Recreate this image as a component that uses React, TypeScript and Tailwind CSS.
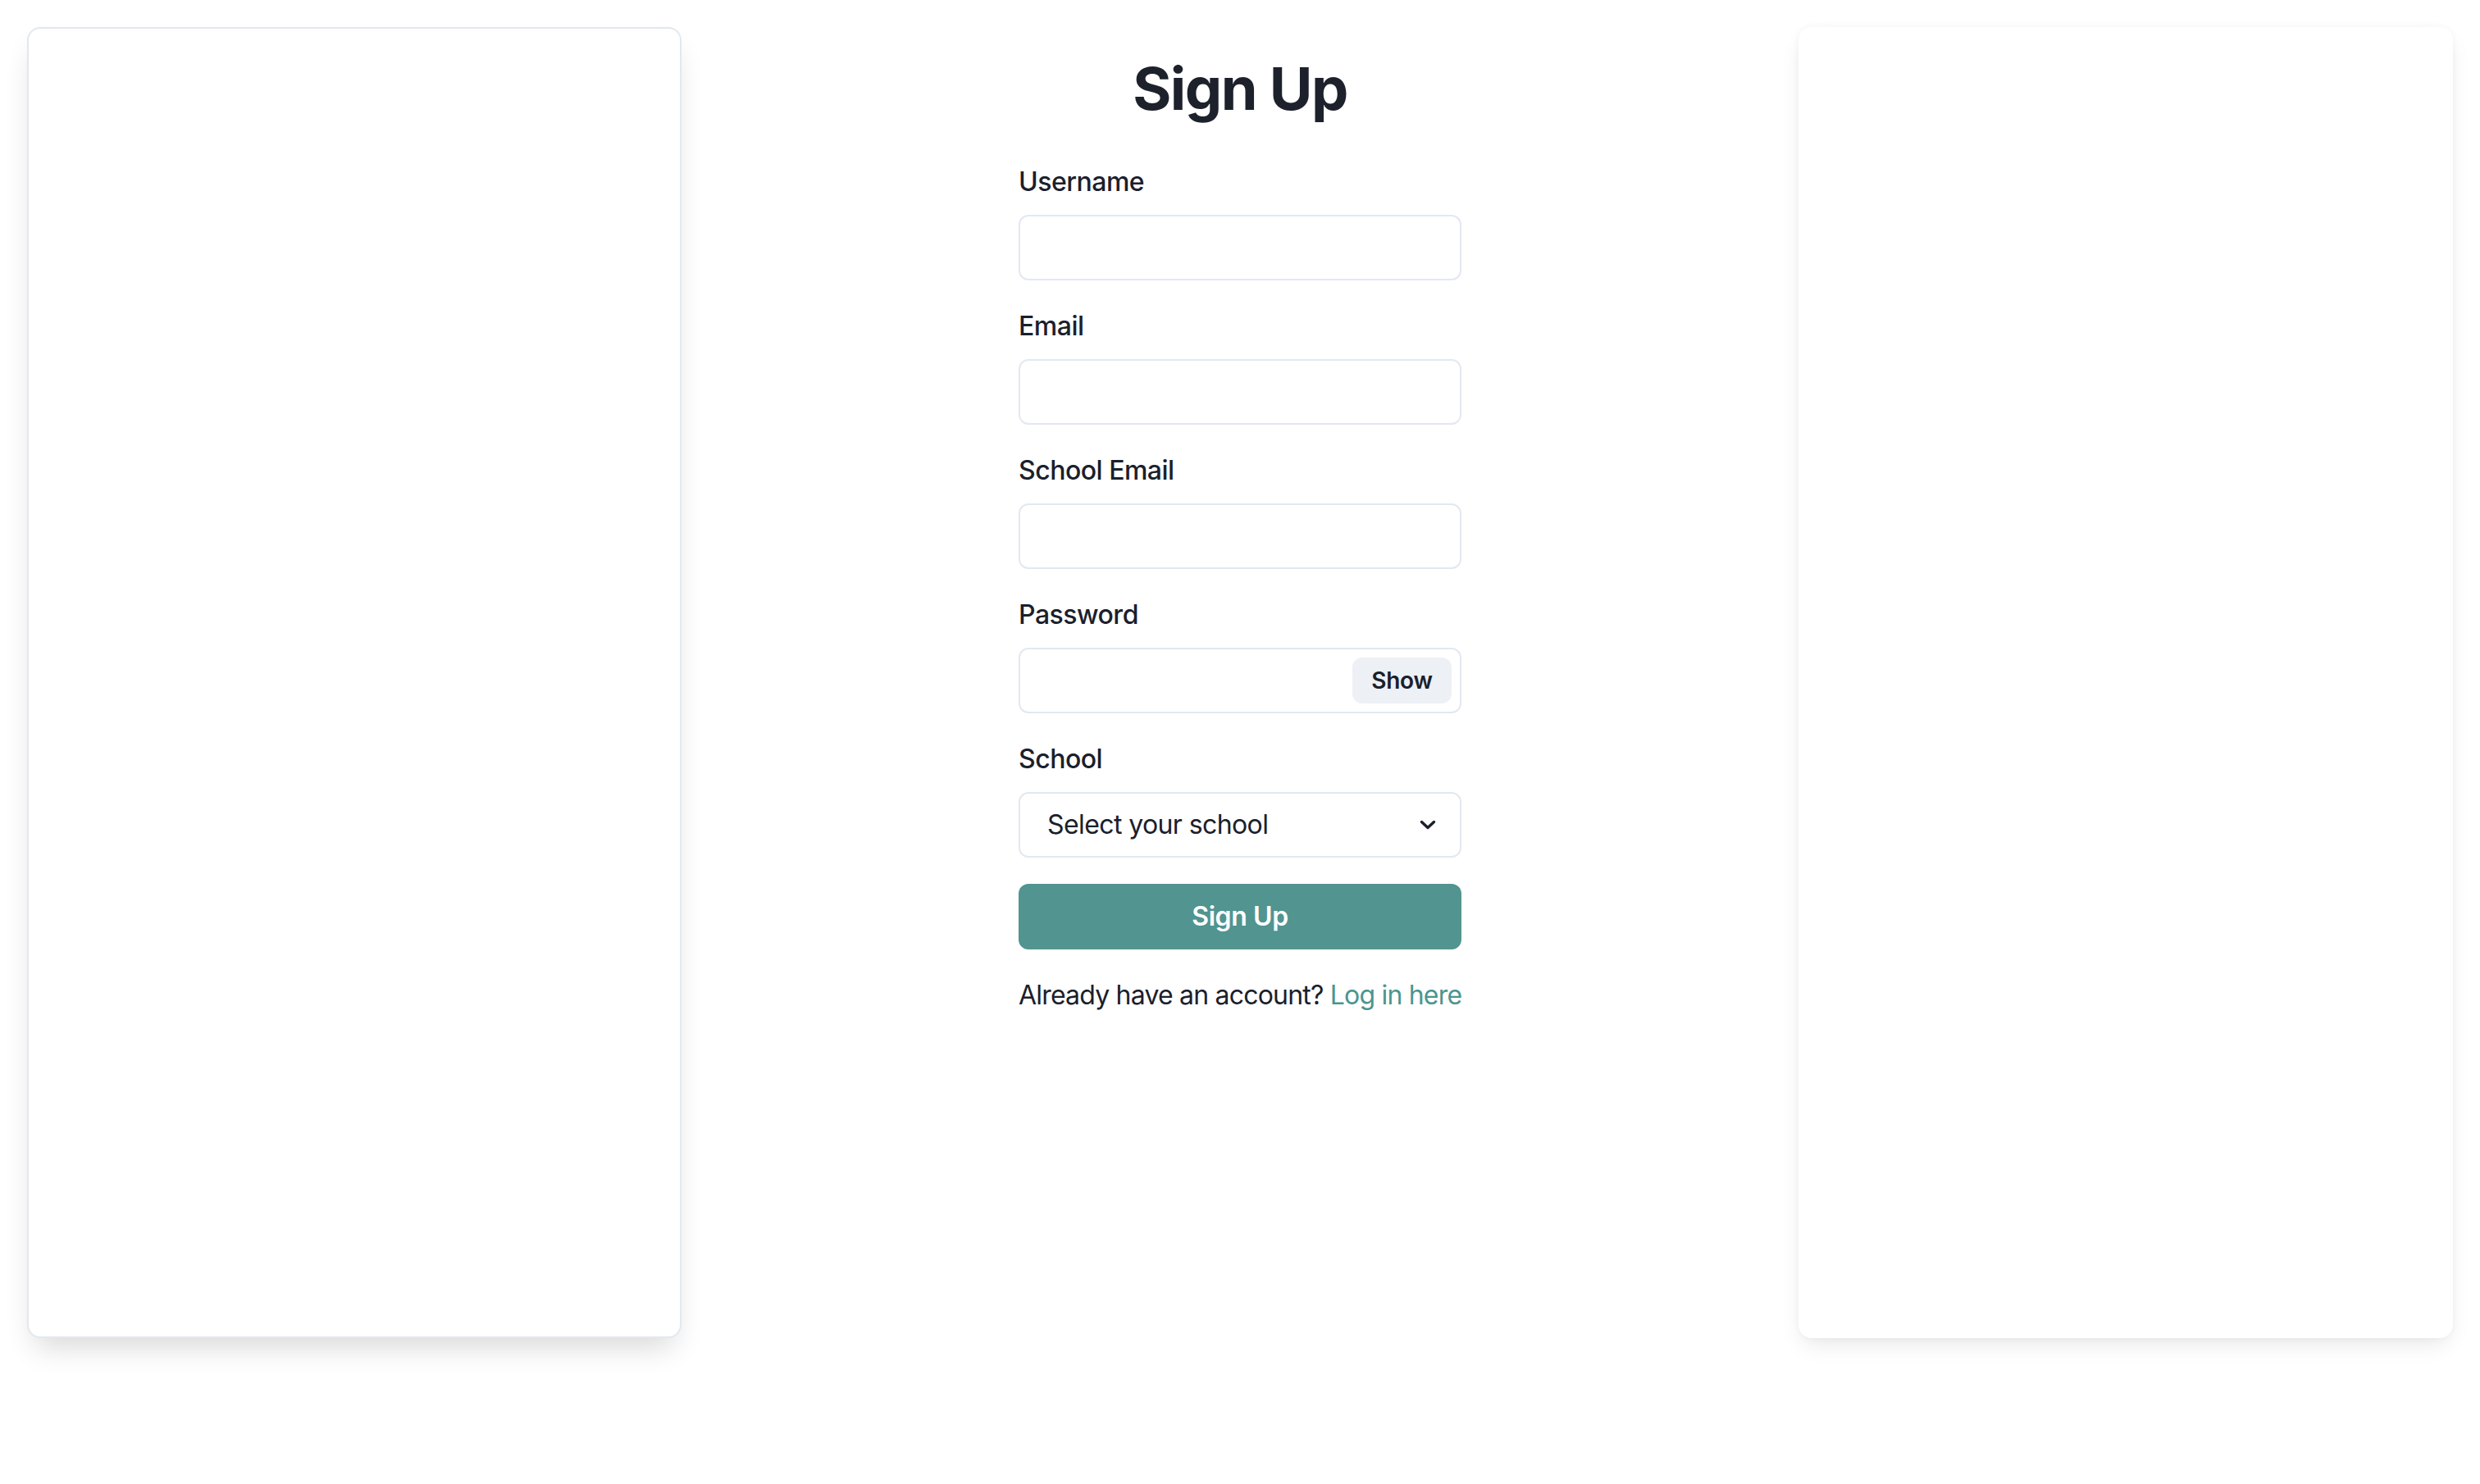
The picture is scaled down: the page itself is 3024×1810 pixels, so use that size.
import { useState } from "react";

const fields = [
  { id: "username", label: "Username", type: "text" },
  { id: "email", label: "Email", type: "email" },
  { id: "schoolEmail", label: "School Email", type: "email" },
];

function Label({ htmlFor, children }: { htmlFor: string; children: string }) {
  return (
    <label
      htmlFor={htmlFor}
      className="mb-[16px] block text-[32px] leading-[48px] font-medium tracking-[-0.5px] text-[#1a202c]"
    >
      {children}
    </label>
  );
}

export default function App() {
  const [showPassword, setShowPassword] = useState(false);

  return (
    <div className="min-h-screen bg-white font-['Inter','Noto_Sans',sans-serif] text-[#1a202c]">
      <div className="flex items-start justify-between px-[33px] pt-[33px]">
        <aside className="h-[1599px] w-[798px] rounded-[16px] border-2 border-[#e2e8f0] bg-white shadow-[0_20px_36px_-10px_rgba(0,0,0,0.16)]" />

        <main className="flex w-[540px] flex-col pt-[35px]">
          <h1 className="mb-[50px] text-center text-[72px] leading-[80px] font-bold tracking-[-1.5px] text-[#1d212b]">
            Sign Up
          </h1>

          <form onSubmit={(event) => event.preventDefault()}>
            {fields.map((field) => (
              <div key={field.id} className="mb-[32px]">
                <Label htmlFor={field.id}>{field.label}</Label>
                <input
                  id={field.id}
                  type={field.type}
                  className="block h-[80px] w-full rounded-[12px] border-2 border-[#e2e8f0] px-[32px] text-[32px] outline-none"
                />
              </div>
            ))}

            <div className="mb-[32px]">
              <Label htmlFor="password">Password</Label>
              <div className="relative">
                <input
                  id="password"
                  type={showPassword ? "text" : "password"}
                  className="block h-[80px] w-full rounded-[12px] border-2 border-[#e2e8f0] pr-[150px] pl-[32px] text-[32px] outline-none"
                />
                <button
                  type="button"
                  onClick={() => setShowPassword((v) => !v)}
                  className="absolute top-1/2 right-[12px] h-[56px] w-[121px] -translate-y-1/2 rounded-[12px] bg-[#edf0f5] text-[28px] font-semibold tracking-[-0.3px] text-[#1a202c]"
                >
                  {showPassword ? "Hide" : "Show"}
                </button>
              </div>
            </div>

            <div className="mb-[32px]">
              <Label htmlFor="school">School</Label>
              <div className="relative">
                <select
                  id="school"
                  defaultValue=""
                  className="block h-[80px] w-full appearance-none rounded-[12px] border-2 border-[#e2e8f0] bg-white pr-[80px] pl-[33px] text-[32px] tracking-[-0.6px] text-[#1a202c] outline-none"
                >
                  <option value="" disabled>
                    Select your school
                  </option>
                </select>
                <svg
                  viewBox="0 0 20 14"
                  className="pointer-events-none absolute top-1/2 right-[31px] h-[14px] w-[20px] -translate-y-1/2"
                  fill="none"
                  stroke="#1a202c"
                  strokeWidth="3.4"
                  strokeLinecap="round"
                  strokeLinejoin="round"
                >
                  <path d="M2.5 3.5 10 10.5 17.5 3.5" />
                </svg>
              </div>
            </div>

            <button
              type="submit"
              className="block h-[80px] w-full rounded-[12px] bg-[#519490] text-[32px] font-semibold tracking-[-0.4px] text-white"
            >
              Sign Up
            </button>
          </form>

          <p className="mt-[32px] whitespace-nowrap text-[32px] leading-[48px] tracking-[-0.8px] text-[#1a202c]">
            Already have an account?{" "}
            <a href="#" className="text-[#4a9590]">
              Log in here
            </a>
          </p>
        </main>

        <aside className="h-[1599px] w-[798px] rounded-[16px] bg-white shadow-[0_12px_28px_-6px_rgba(0,0,0,0.1),0_0_10px_rgba(0,0,0,0.04)]" />
      </div>
    </div>
  );
}
